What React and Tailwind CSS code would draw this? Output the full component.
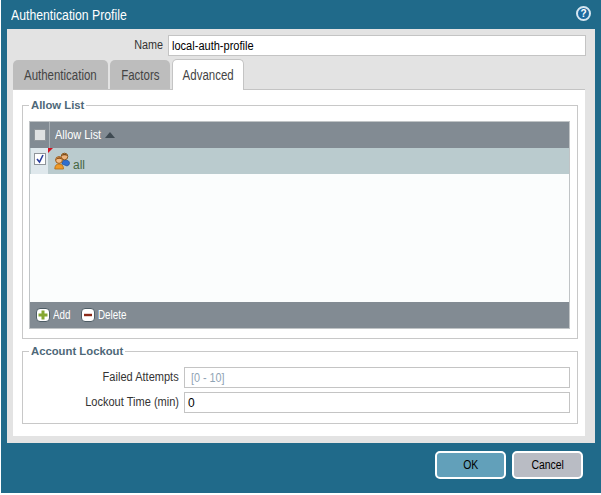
import React from 'react';

function GroupIcon() {
  return (
    <svg width="16" height="18" viewBox="0 0 16 18" className="shrink-0">
      <path d="M8 12 Q8 8 11 8 Q15.5 8 15.5 11.5 Q15.5 13 13 14Z" fill="#2f6fd0" stroke="#1f4f9a" strokeWidth="0.7" />
      <circle cx="10.5" cy="4.5" r="3.3" fill="#eeb27a" stroke="#8a5a20" strokeWidth="1" />
      <path d="M7 4 Q10.5 -0.5 14 4 Q10.5 2.5 7 4Z" fill="#7a4a18" />
      <circle cx="5" cy="8" r="3.4" fill="#f4bd85" stroke="#9a5a18" strokeWidth="1" />
      <path d="M1.5 8 Q5 2.8 8.5 7.5 Q5 6 1.5 8Z" fill="#8a4a10" />
      <path d="M0.8 17 Q0.8 12 5 12 Q9.5 12 9.5 17Z" fill="#f09a28" stroke="#b06a10" strokeWidth="0.8" />
    </svg>
  );
}

function Checkbox({ checked }) {
  return (
    <div className={`w-[12px] h-[12px] border border-[#8f959a] flex items-center justify-center ${checked ? 'bg-white' : 'bg-[#dfe1e2]'}`}>
      {checked && (
        <svg width="10" height="10" viewBox="0 0 10 10">
          <path d="M2 5 L4.5 8 L8 1" fill="none" stroke="#2b3f9e" strokeWidth="1.6" />
        </svg>
      )}
    </div>
  );
}

function RoundIcon({ type }) {
  return (
    <div className="w-[14px] h-[14px] rounded-[4px] bg-white border border-[#4e5d66] flex items-center justify-center">
      <svg width="10" height="10" viewBox="0 0 10 10">
        {type === 'add' ? (
          <path d="M5 0.5 V9.5 M0.5 5 H9.5" stroke="#86a832" strokeWidth="3" />
        ) : (
          <path d="M1 5 H9" stroke="#8c2a1a" strokeWidth="2.4" />
        )}
      </svg>
    </div>
  );
}

function LabeledField({ label, value, placeholder }) {
  return (
    <div className="flex items-center h-[20px]">
      <div className="w-[161px] pr-[5px] text-right text-[12px] text-[#333]">
        <span className="inline-block scale-x-[0.92] origin-right">{label}</span>
      </div>
      <div className="w-[386px] h-[21px] border border-[#c4c4c4] bg-white px-[3px] text-[12px] leading-[20px] text-black">
        {value}
        {placeholder && <span className="ml-[3px] inline-block scale-x-[0.9] origin-left text-[#8fa4b5]">{placeholder}</span>}
      </div>
    </div>
  );
}

function Tab({ label, active, width }) {
  return (
    <div className={`${width} rounded-t-[5px] flex items-center justify-center pt-[1px] text-[14px] text-[#444] ${active ? 'relative -mb-px h-[31px] bg-white border border-b-0 border-[#c4c4c4]' : 'h-[29px] bg-[#bdbdbd]'}`}>
      <span className="scale-x-[0.82]">{label}</span>
    </div>
  );
}

export default function App() {
  return (
    <div className="w-[601px] h-[495px] bg-white overflow-hidden font-['Liberation_Sans',Arial,sans-serif]">
      <div className="ml-[1px] h-[493px] bg-[#206a8a] flex flex-col">
        {/* TITLE */}
        <div className="h-[29px] flex items-center justify-between pl-[10px] pr-[10px]">
          <span className="pt-[2px] text-[14px] text-white scale-x-[0.875] origin-left">Authentication Profile</span>
          <div className="-mt-[2px] w-[15px] h-[15px] rounded-full bg-[#1d6aa0] border-2 border-[#d5e6f0] flex items-center justify-center text-white text-[10px] font-bold leading-none">?</div>
        </div>

        {/* BODY */}
        <div className="ml-[6px] w-[588px] h-[414px] bg-[#e3e3e3] px-[6px] pt-[6px]">
          <div className="flex items-center h-[20px]">
            <div className="w-[155px] pr-[5px] text-right text-[12px] text-[#333]">
              <span className="inline-block scale-x-[0.9] origin-right">Name</span>
            </div>
            <div className="w-[418px] h-[21px] border border-[#c4c4c4] bg-white px-[3px] text-[12px] leading-[20px] text-black">
              <span className="inline-block scale-x-[0.92] origin-left">local-auth-profile</span>
            </div>
          </div>

          {/* TABS */}
          <div className="flex gap-[2px] mt-[5px] h-[30px] items-end border-b border-[#c4c4c4] w-[572px]">
            <Tab label="Authentication" width="w-[95px]" />
            <Tab label="Factors" width="w-[60px]" />
            <Tab label="Advanced" width="w-[72px]" active />
          </div>

          {/* TAB PANEL */}
          <div className="w-[572px] h-[346px] bg-white pl-[9px] pr-[7px] pt-[8px]">
            <fieldset className="border border-[#c8c8c8] h-[241px] px-[6px]">
              <legend className="px-[2px] text-[11.3px] leading-[14px] font-bold text-[#4e6878]">Allow List</legend>
              <div className="mt-[9px] w-[541px] h-[208px] border border-[#c0c4c6] bg-[#fbfdfd] flex flex-col">
                <div className="h-[26px] bg-[#828b93] flex items-center text-white text-[12px]">
                  <div className="w-[19px] h-full flex items-center justify-center border-r border-[#a9b0b5] ml-[1px]">
                    <Checkbox />
                  </div>
                  <span className="ml-[5px] w-[48px] whitespace-nowrap scale-x-[0.91] origin-left">Allow List</span>
                  <svg width="10" height="6" viewBox="0 0 10 6" className="ml-[2px]"><path d="M0 6 L5 0 L10 6Z" fill="#3f4a52" /></svg>
                </div>
                <div className="relative h-[26px] bg-[#bacbce] flex items-center text-[12px] text-[#46663f]">
                  <div className="w-[17px] h-full bg-[#dfe8ec] flex justify-center pt-[5px] ml-[1px]">
                    <Checkbox checked />
                  </div>
                  <div className="absolute left-[18px] top-0 w-0 h-0 border-t-[5px] border-r-[5px] border-t-[#d01020] border-r-transparent" />
                  <div className="ml-[6px]"><GroupIcon /></div>
                  <span className="ml-[3px] mt-[8px]">all</span>
                </div>
                <div className="flex-1" />
                <div className="h-[26px] bg-[#828b93] flex items-center pl-[6px] text-[12px] text-white">
                  <RoundIcon type="add" />
                  <span className="ml-[3px] w-[18px] scale-x-[0.82] origin-left">Add</span>
                  <div className="ml-[10px]"><RoundIcon type="delete" /></div>
                  <span className="ml-[3px] scale-x-[0.82] origin-left">Delete</span>
                </div>
              </div>
            </fieldset>

            <fieldset className="mt-[5px] border border-[#c8c8c8] h-[80px] px-[6px]">
              <legend className="px-[2px] text-[11.3px] leading-[14px] font-bold text-[#4e6878]">Account Lockout</legend>
              <div className="-ml-[6px] mt-[9px] flex flex-col gap-[5px]">
                <LabeledField label="Failed Attempts" placeholder="[0 - 10]" />
                <LabeledField label="Lockout Time (min)" value="0" />
              </div>
            </fieldset>
          </div>
        </div>

        {/* FOOTER */}
        <div className="flex justify-end gap-[6px] pr-[18px] pt-[8px]">
          <button className="w-[71px] h-[28px] rounded-[5px] border-2 border-white bg-[#62a0ba] text-[12px] text-black">
            <span className="inline-block scale-x-[0.87]">OK</span>
          </button>
          <button className="w-[71px] h-[28px] rounded-[5px] border-2 border-white bg-[#b9bcc4] text-[12px] text-black">
            <span className="inline-block scale-x-[0.87]">Cancel</span>
          </button>
        </div>
      </div>
    </div>
  );
}
